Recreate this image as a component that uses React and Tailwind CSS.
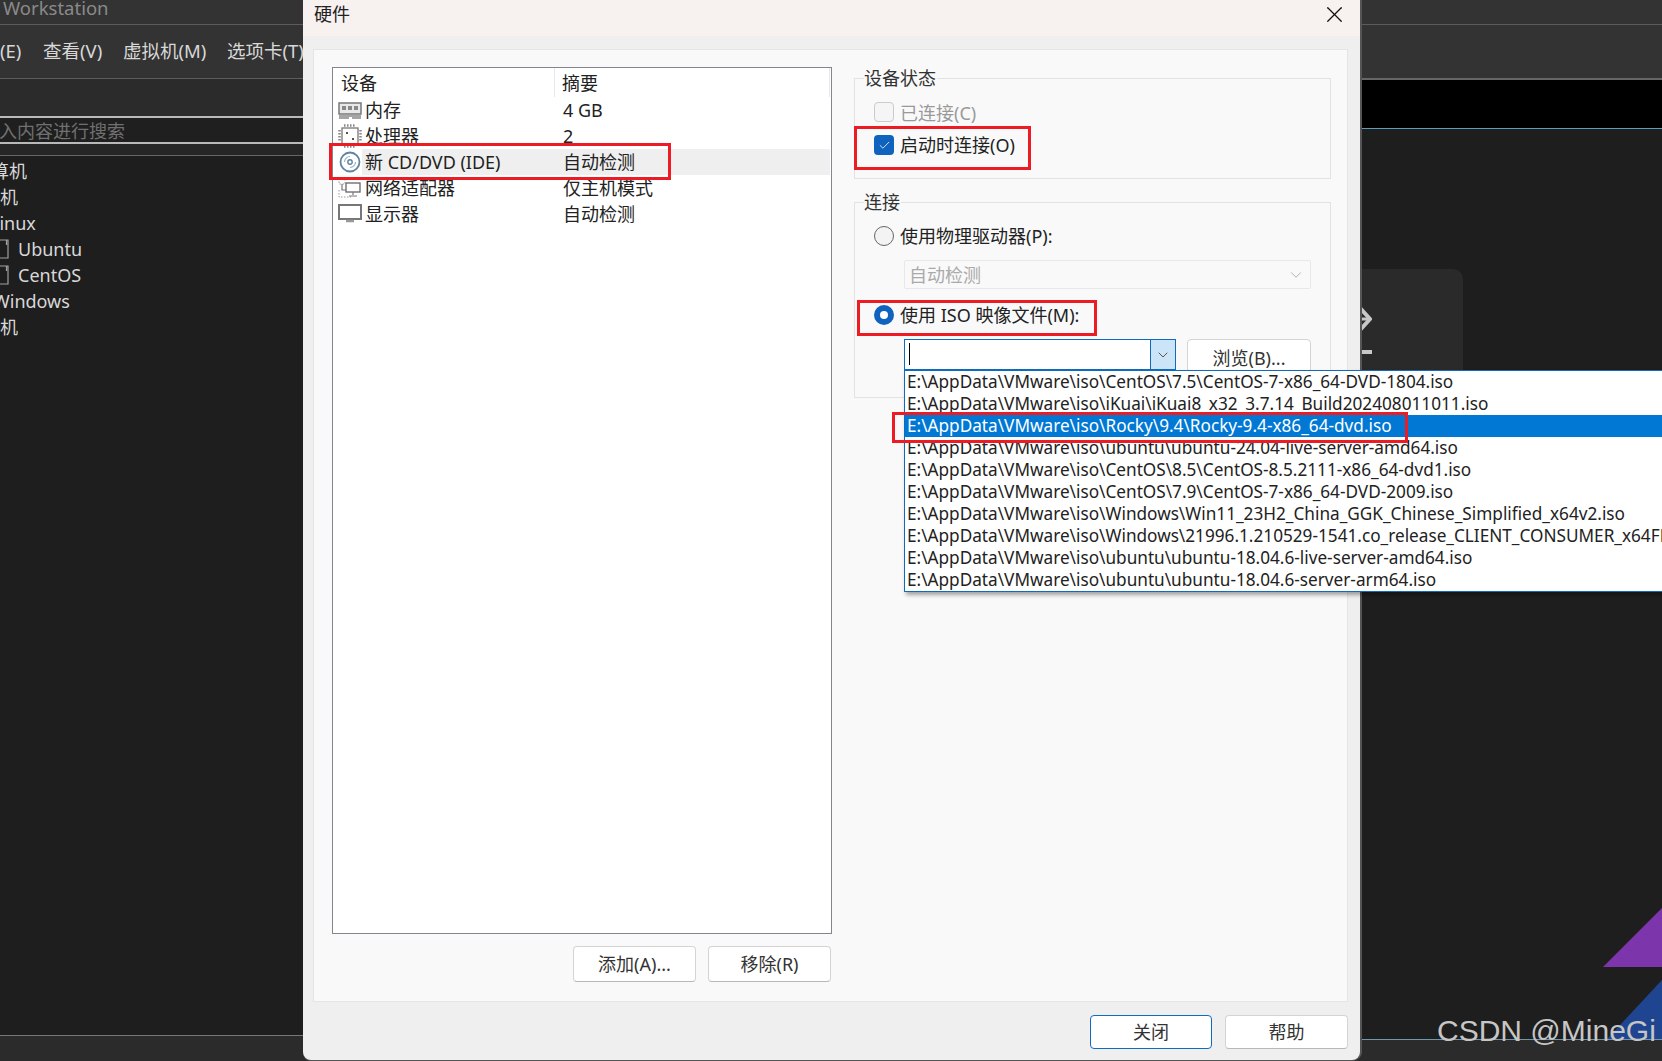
import React from 'react';
import { Check, ChevronDown, X } from 'lucide-react';

const FONT = "font-['Noto_Sans','Noto_Sans_CJK_SC',sans-serif]";

const devices = [
  { icon: 'memory', name: '内存', summary: '4 GB' },
  { icon: 'cpu', name: '处理器', summary: '2' },
  { icon: 'cd', name: '新 CD/DVD (IDE)', summary: '自动检测', selected: true },
  { icon: 'network', name: '网络适配器', summary: '仅主机模式' },
  { icon: 'monitor', name: '显示器', summary: '自动检测' },
];

const isoFiles = [
  'E:\\AppData\\VMware\\iso\\CentOS\\7.5\\CentOS-7-x86_64-DVD-1804.iso',
  'E:\\AppData\\VMware\\iso\\iKuai\\iKuai8_x32_3.7.14_Build202408011011.iso',
  'E:\\AppData\\VMware\\iso\\Rocky\\9.4\\Rocky-9.4-x86_64-dvd.iso',
  'E:\\AppData\\VMware\\iso\\ubuntu\\ubuntu-24.04-live-server-amd64.iso',
  'E:\\AppData\\VMware\\iso\\CentOS\\8.5\\CentOS-8.5.2111-x86_64-dvd1.iso',
  'E:\\AppData\\VMware\\iso\\CentOS\\7.9\\CentOS-7-x86_64-DVD-2009.iso',
  'E:\\AppData\\VMware\\iso\\Windows\\Win11_23H2_China_GGK_Chinese_Simplified_x64v2.iso',
  'E:\\AppData\\VMware\\iso\\Windows\\21996.1.210529-1541.co_release_CLIENT_CONSUMER_x64FRE_zh-cn.iso',
  'E:\\AppData\\VMware\\iso\\ubuntu\\ubuntu-18.04.6-live-server-amd64.iso',
  'E:\\AppData\\VMware\\iso\\ubuntu\\ubuntu-18.04.6-server-arm64.iso',
];

const DeviceIcon = ({ type }) => {
  if (type === 'memory') {
    return (
      <svg width="24" height="17" viewBox="0 0 24 17">
        <rect x="1" y="1" width="22" height="11" fill="#e8e8e8" stroke="#777" strokeWidth="1.5" />
        <rect x="4" y="4" width="4" height="4" fill="#888" />
        <rect x="10" y="4" width="4" height="4" fill="#888" />
        <rect x="16" y="4" width="4" height="4" fill="#888" />
        <path d="M1 14h22M1 16h10M14 16h9" stroke="#888" strokeWidth="1.5" />
      </svg>
    );
  }
  if (type === 'cpu') {
    return (
      <svg width="24" height="24" viewBox="0 0 24 24">
        <rect x="4" y="4" width="16" height="16" fill="none" stroke="#777" strokeWidth="1.3" />
        <path d="M6 1.500h12M6 22.500h12M1.500 6v12M22.500 6v12" stroke="#888" strokeWidth="2.5" strokeDasharray="1.5 1.5" />
        <rect x="8" y="8" width="2" height="2" fill="#555" />
        <rect x="14" y="14" width="2" height="2" fill="#555" />
      </svg>
    );
  }
  if (type === 'cd') {
    return (
      <svg width="22" height="22" viewBox="0 0 22 22" fill="none">
        <circle cx="11" cy="11" r="9.5" stroke="#5f84a3" strokeWidth="1.8" />
        <circle cx="11" cy="11" r="2.2" stroke="#5f84a3" strokeWidth="1.4" />
        <path d="M5.500 11a5.500 5.500 0 0 1 5.500-5.500M16.500 11a5.500 5.500 0 0 1-5.500 5.500" stroke="#9db3c5" strokeWidth="1.2" />
      </svg>
    );
  }
  if (type === 'network') {
    return (
      <svg width="24" height="20" viewBox="0 0 24 20" fill="none">
        <path d="M1 1h6v5H1zM1 12v7h12" stroke="#999" strokeDasharray="1.5 1.5" />
        <rect x="8" y="5" width="14" height="9" stroke="#666" strokeWidth="1.3" />
        <path d="M4 6v6h4M15 14v3M11 18h8" stroke="#777" strokeWidth="1.2" />
      </svg>
    );
  }
  return (
    <svg width="24" height="20" viewBox="0 0 24 20" fill="none">
      <rect x="1" y="1" width="22" height="14" stroke="#777" strokeWidth="2" />
      <path d="M8 17h8" stroke="#999" strokeWidth="2.5" />
    </svg>
  );
};

const TreeFile = () => (
  <svg width="9" height="20" viewBox="0 0 9 20" fill="none" className="mr-[9px]">
    <path d="M0 1h8v18H0M6.500 1v5" stroke="#a0a0a0" strokeWidth="1.2" />
  </svg>
);

const GroupBox = ({ title, className, children }) => (
  <div className={`relative border border-[#e2e2e2] ${className}`}>
    <span className="absolute left-[9px] -top-[13px] bg-[#f9f9f9] pr-[1px] text-[18px] leading-[24px] text-[#333]">{title}</span>
    {children}
  </div>
);

const Radio = ({ checked }) => (
  checked ? (
    <span className="w-[20px] h-[20px] rounded-full bg-[#0f62be] flex items-center justify-center">
      <span className="w-[8px] h-[8px] rounded-full bg-white" />
    </span>
  ) : (
    <span className="w-[20px] h-[20px] rounded-full border border-[#666] bg-[#f3f3f3]" />
  )
);

const DialogButton = ({ label, primary, className = '' }) => (
  <button className={`rounded-[4px] bg-white text-[18px] text-[#333] flex items-center justify-center ${primary ? 'border border-[#0f6cbd]' : 'border border-[#d4d4d4] border-b-[#b8b8b8]'} ${className}`}>
    {label}
  </button>
);

const RedBox = ({ className }) => (
  <div className={`absolute border-[3px] border-[#ed1c24] pointer-events-none ${className}`} />
);

const HardwareDialog = () => (
  <div className="absolute left-[303px] top-0 w-[1057px] h-[1060px] bg-[#efefef] rounded-b-[8px] flex flex-col shadow-[2px_0_0_#555,0_1px_0_#555]">
    <div className="h-[36px] shrink-0 bg-[#f7f1f0] flex items-center justify-between pl-[11px] pr-[12px]">
      <span className="text-[18px] text-[#222] -mt-[8px]">硬件</span>
      <X size={27} strokeWidth={1.1} className="text-[#111] -mt-[8px]" />
    </div>

    <div className="ml-[10px] mr-[12px] mt-[13px] h-[953px] bg-[#f9f9f9] border border-[#e5e5e5] flex">
      <div className="ml-[18px] mt-[17px] w-[500px] flex flex-col">
        <div className="h-[867px] bg-white border border-[#85858d] text-[18px] text-[#222]">
          <div className="h-[29px] flex items-center leading-[30px]">
            <span className="w-[222px] pl-[8px] h-full flex items-center border-r border-[#e8e8e8]">设备</span>
            <span className="flex-1 pl-[7px] h-full flex items-center border-r border-[#e8e8e8] mr-[1px]">摘要</span>
          </div>
          <div>
            {devices.map(d => (
              <div key={d.name} className="h-[26px] flex items-center leading-[26px]">
                <span className="w-[24px] ml-[5px] shrink-0 flex justify-center"><DeviceIcon type={d.icon} /></span>
                <div className={`flex-1 h-full flex mr-[1px] ${d.selected ? 'bg-[#efefef]' : ''}`}>
                  <span className="w-[201px] pl-[3px] whitespace-nowrap">{d.name}</span>
                  <span className="whitespace-nowrap">{d.summary}</span>
                </div>
              </div>
            ))}
          </div>
        </div>
        <div className="mt-[12px] flex justify-end gap-[12px] pr-[1px]">
          <DialogButton label="添加(A)..." className="w-[123px] h-[36px]" />
          <DialogButton label="移除(R)" className="w-[123px] h-[36px]" />
        </div>
      </div>

      <div className="ml-[22px] mt-[28px] w-[477px] flex flex-col gap-[23px]">
        <GroupBox title="设备状态" className="h-[101px] pl-[19px] pt-[23px]">
          <div className="flex items-center gap-[6px] h-[20px] text-[18px] text-[#999]">
            <span className="w-[20px] h-[20px] rounded-[4px] border border-[#ccc] bg-[#f5f5f5]" />
            <span className="pt-[2px]">已连接(C)</span>
          </div>
          <div className="flex items-center gap-[6px] h-[20px] mt-[13px] text-[18px] text-[#222]">
            <span className="w-[20px] h-[20px] rounded-[4px] bg-[#0f62be] flex items-center justify-center">
              <Check size={13} strokeWidth={1.5} className="text-white" />
            </span>
            <span>启动时连接(O)</span>
          </div>
        </GroupBox>

        <GroupBox title="连接" className="h-[196px] pl-[19px] pt-[23px]">
          <div className="flex items-center gap-[6px] h-[20px] text-[18px] text-[#222]">
            <Radio />
            <span>使用物理驱动器(P):</span>
          </div>
          <div className="ml-[30px] mt-[14px] w-[407px] h-[29px] border border-[#e8e8e8] bg-[#f9f9f9] rounded-[2px] flex items-center justify-between pl-[4px] pr-[5px] text-[18px] text-[#aaa]">
            <span className="pt-[2px]">自动检测</span>
            <ChevronDown size={18} strokeWidth={1} className="text-[#999]" />
          </div>
          <div className="flex items-center gap-[6px] h-[20px] mt-[16px] text-[18px] text-[#222]">
            <Radio checked />
            <span>使用 ISO 映像文件(M):</span>
          </div>
          <div className="ml-[30px] mt-[14px] flex items-start">
            <div className="w-[272px] h-[31px] border border-[#0f6cbd] bg-white flex justify-between">
              <span className="w-[1px] h-[22px] bg-black ml-[4px] mt-[3px]" />
              <span className="w-[25px] h-full bg-[#cce4f7] border-l border-[#0f6cbd] flex items-center justify-center">
                <ChevronDown size={16} strokeWidth={1.5} className="text-[#555]" />
              </span>
            </div>
            <div className="ml-[11px] w-[124px] h-[34px] bg-white border border-[#d4d4d4] rounded-[4px] flex items-center justify-center text-[18px] text-[#333] pt-[5px]">
              浏览(B)...
            </div>
          </div>
        </GroupBox>
      </div>
    </div>

    <div className="mt-[13px] flex justify-end gap-[13px] pr-[12px]">
      <DialogButton label="关闭" primary className="w-[122px] h-[34px]" />
      <DialogButton label="帮助" className="w-[123px] h-[34px]" />
    </div>
  </div>
);

const IsoDropdown = () => (
  <div className="absolute left-[904px] top-[370px] w-[820px] h-[222px] bg-white border border-[#0f6cbd] shadow-[2px_3px_4px_rgba(0,0,0,0.35)] text-[17.2px] text-[#222]">
    {isoFiles.map(f => (
      <div key={f} className={`h-[22px] leading-[21px] pl-[2px] whitespace-nowrap ${f.includes('Rocky') ? 'bg-[#0078d4] text-white' : ''}`}>{f}</div>
    ))}
  </div>
);

const Sidebar = () => (
  <div className="w-[303px] shrink-0 flex flex-col border-t border-[#5c5c5c] overflow-hidden">
    <div className="h-[37px] bg-[#2b2b2b]" />
    <div className="h-[28px] bg-[#1f1f1f] border-y-2 border-[#b9b9b9] text-[18px] leading-[26px] -ml-[1px] text-[#707070] whitespace-nowrap">入内容进行搜索</div>
    <div className="h-[12px] bg-[#262626] border-b border-[#666]" />
    <div className="flex-1 bg-[#1e1e1e] text-[18px] text-[#d8d8d8] pt-[2px]">
      <div className="h-[26px] leading-[26px] -ml-[9px]">算机</div>
      <div className="h-[26px] leading-[26px]">机</div>
      <div className="h-[26px] leading-[26px] -ml-[10px]">Linux</div>
      <div className="h-[26px] flex items-center"><TreeFile />Ubuntu</div>
      <div className="h-[26px] flex items-center"><TreeFile />CentOS</div>
      <div className="h-[26px] leading-[26px] -ml-[7px]">Windows</div>
      <div className="h-[26px] leading-[26px]">机</div>
    </div>
    <div className="h-[26px] bg-[#2b2b2b] border-t border-[#777]" />
  </div>
);

const MainArea = () => (
  <div className="flex-1 flex flex-col border-t-2 border-[#666]">
    <div className="h-[48px] bg-black border-b border-[#5c9dbd] box-content -mb-[1px]" />
    <div className="relative flex-1 overflow-hidden">
      <div className="ml-[997px] mt-[141px] w-[163px] h-[300px] rounded-[10px] bg-[#2a2a2a] pt-[38px] pr-[91px] flex flex-col items-end gap-[19px]">
        <svg width="14" height="24" viewBox="0 0 14 24" fill="none">
          <path d="M2 1l10 11-10 11" stroke="#c8c8c8" strokeWidth="4" />
          <path d="M0 12h10" stroke="#c8c8c8" strokeWidth="3" />
        </svg>
        <span className="w-[12px] h-[4px] bg-[#c8c8c8]" />
      </div>
      <svg width="59" height="131" viewBox="0 0 59 131" className="absolute right-0 bottom-0">
        <polygon points="0,59 59,0 59,59" fill="#7d35ac" />
        <polygon points="4,131 59,72 59,131" fill="#1f4590" />
      </svg>
    </div>
    <div className="h-[22px] bg-[#2b2b2b] border-t border-[#6f98ad]" />
  </div>
);

const App = () => (
  <div className={`relative w-[1662px] h-[1061px] overflow-hidden flex flex-col bg-[#1e1e1e] ${FONT}`}>
    <div className="h-[25px] shrink-0 bg-[#333] border-b border-[#5c5c5c] pl-[3px] text-[18.5px] leading-[16px] text-[#8a8a8a]">Workstation</div>
    <div className="h-[53px] shrink-0 bg-[#333] flex items-center text-[18.5px] text-[#d8d8d8] whitespace-nowrap overflow-hidden pb-[2px]">
      <span className="w-[43px]">(E)</span>
      <span className="w-[80px]">查看(V)</span>
      <span className="w-[104px]">虚拟机(M)</span>
      <span>选项卡(T)</span>
    </div>
    <div className="flex-1 flex min-h-0">
      <Sidebar />
      <MainArea />
    </div>

    <HardwareDialog />
    <IsoDropdown />

    <RedBox className="left-[329px] top-[143px] w-[342px] h-[37px]" />
    <RedBox className="left-[854px] top-[126px] w-[177px] h-[44px]" />
    <RedBox className="left-[857px] top-[300px] w-[240px] h-[36px]" />
    <RedBox className="left-[892px] top-[412px] w-[516px] h-[31px]" />

    <div className="absolute left-[1437px] top-[1014px] font-['Liberation_Sans',sans-serif] text-[30px] leading-[34px] text-[#c6c6c6] whitespace-nowrap">CSDN @MineGi</div>
  </div>
);

export default App;
